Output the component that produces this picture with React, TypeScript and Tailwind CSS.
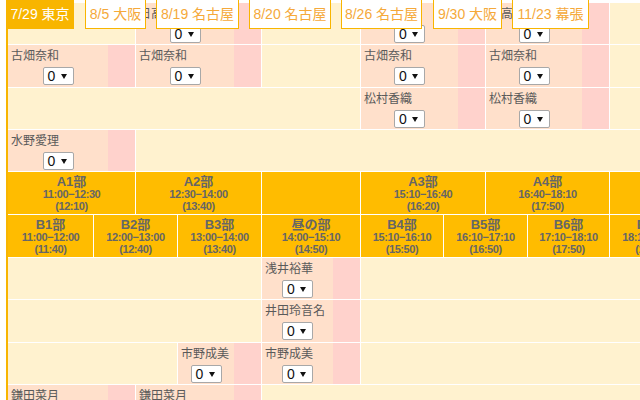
import React from 'react';

type Cell =
    | { k: 'b'; s: number }
    | { k: 'm'; s: number; n: string }
    | { k: 'h'; s: number; t?: string; time?: string; mid?: string };

const TABS = [
    { label: '7/29 東京', w: 'w-[68px]', ml: 'ml-0', active: true },
    { label: '8/5 大阪', w: 'w-[61px]', ml: 'ml-[11px]' },
    { label: '8/19 名古屋', w: 'w-[83px]', ml: 'ml-[10px]' },
    { label: '8/20 名古屋', w: 'w-[82px]', ml: 'ml-[10px]' },
    { label: '8/26 名古屋', w: 'w-[81px]', ml: 'ml-[10px]' },
    { label: '9/30 大阪', w: 'w-[69px]', ml: 'ml-[11px]' },
    { label: '11/23 幕張', w: 'w-[77px]', ml: 'ml-[10px]' },
];

const b = (s: number): Cell => ({ k: 'b', s });
const m = (s: number, n: string): Cell => ({ k: 'm', s, n });
const h = (s: number, t?: string, time?: string, mid?: string): Cell => ({ k: 'h', s, t, time, mid });

const ROWS: Cell[][] = [
    [b(3), m(3, '日高優月'), b(1), m(3, '日高優月'), m(3, '日高優月'), b(6)],
    [m(3, '古畑奈和'), m(3, '古畑奈和'), b(1), m(3, '古畑奈和'), m(3, '古畑奈和'), b(6)],
    [b(7), m(3, '松村香織'), m(3, '松村香織'), b(6)],
    [m(3, '水野愛理'), b(16)],
    [
        h(3, 'A1部', '11:00−12:30', '(12:10)'),
        h(3, 'A2部', '12:30−14:00', '(13:40)'),
        h(1),
        h(3, 'A3部', '15:10−16:40', '(16:20)'),
        h(3, 'A4部', '16:40−18:10', '(17:50)'),
        h(6),
    ],
    [
        h(2, 'B1部', '11:00−12:00', '(11:40)'),
        h(2, 'B2部', '12:00−13:00', '(12:40)'),
        h(2, 'B3部', '13:00−14:00', '(13:40)'),
        h(1, '昼の部', '14:00−15:10', '(14:50)'),
        h(2, 'B4部', '15:10−16:10', '(15:50)'),
        h(2, 'B5部', '16:10−17:10', '(16:50)'),
        h(2, 'B6部', '17:10−18:10', '(17:50)'),
        h(2, 'B7部', '18:10−19:10', '(18:50)'),
        h(4),
    ],
    [b(6), m(1, '浅井裕華'), b(12)],
    [b(6), m(1, '井田玲音名'), b(12)],
    [b(4), m(2, '市野成美'), m(1, '市野成美'), b(12)],
    [m(3, '鎌田菜月'), m(3, '鎌田菜月'), b(13)],
];

function Select() {
    return (
        <div className="flex h-[18px] w-[31px] items-center justify-between rounded-[2px] border border-[#a8a8a8] bg-white pl-[4px] pr-[6px]">
            <span className="text-[14px] leading-none text-[#111]">0</span>
            <svg width="6" height="5" viewBox="0 0 6 5">
                <path d="M0 0h6L3 5z" fill="#111" />
            </svg>
        </div>
    );
}

function CellView({ c }: { c: Cell }) {
    const span = { gridColumn: `span ${c.s} / span ${c.s}` };
    if (c.k === 'b') return <div style={span} className="bg-[#fff2cf]" />;
    if (c.k === 'm') {
        return (
            <div style={span} className="flex">
                <div className="flex flex-1 flex-col bg-[#ffe0cb] pl-[3px] pt-[4px]">
                    <div className="h-[15px] whitespace-nowrap text-[12px] leading-[15px] text-[#5a5a5a]">{c.n}</div>
                    <div className="mt-[3px] flex justify-center pr-[3px]">
                        <Select />
                    </div>
                </div>
                <div className="w-[27px] bg-[#ffd2cc]" />
            </div>
        );
    }
    return (
        <div style={span} className="flex flex-col items-center justify-center bg-[#ffbc00] pt-[1px] font-bold text-[#666]">
            {c.t && (
                <>
                    <div className="text-[13px] leading-[13px]">{c.t}</div>
                    <div className="text-[11px] leading-[12px] tracking-[-0.4px]">{c.time}</div>
                    <div className="text-[11px] leading-[12px] tracking-[-0.4px]">{c.mid}</div>
                </>
            )}
        </div>
    );
}

export default function App() {
    return (
        <div className="relative h-[400px] w-[640px] overflow-hidden bg-white font-['Liberation_Sans','Noto_Sans_CJK_JP',sans-serif]">
            <div className="ml-[6px] w-max border-l-2 border-[#f8b500] pt-[3px]">
                <div className="grid grid-cols-[42px_42px_41px_41px_41px_41px_98px_41px_40px_41px_41px_40px_40px_41px_41px_41px_41px_41px_41px] grid-rows-[41px_42px_41px_41px_42px_42px_41px_42px_41px_42px] gap-px bg-white">
                    {ROWS.map((row, i) => (
                        <React.Fragment key={i}>
                            {row.map((c, j) => (
                                <CellView key={j} c={c} />
                            ))}
                        </React.Fragment>
                    ))}
                </div>
            </div>

            {/* date tabs float over the table */}
            <div className="absolute left-[6px] top-0 flex">
                {TABS.map((t) => (
                    <div
                        key={t.label}
                        className={`${t.w} ${t.ml} flex h-[29px] items-center justify-center whitespace-nowrap border border-t-0 border-[#f8b500] text-[14px] ${
                            t.active ? 'bg-[#f8b500] text-white' : 'bg-white text-[#f5a93a]'
                        }`}
                    >
                        {t.label}
                    </div>
                ))}
            </div>
        </div>
    );
}
